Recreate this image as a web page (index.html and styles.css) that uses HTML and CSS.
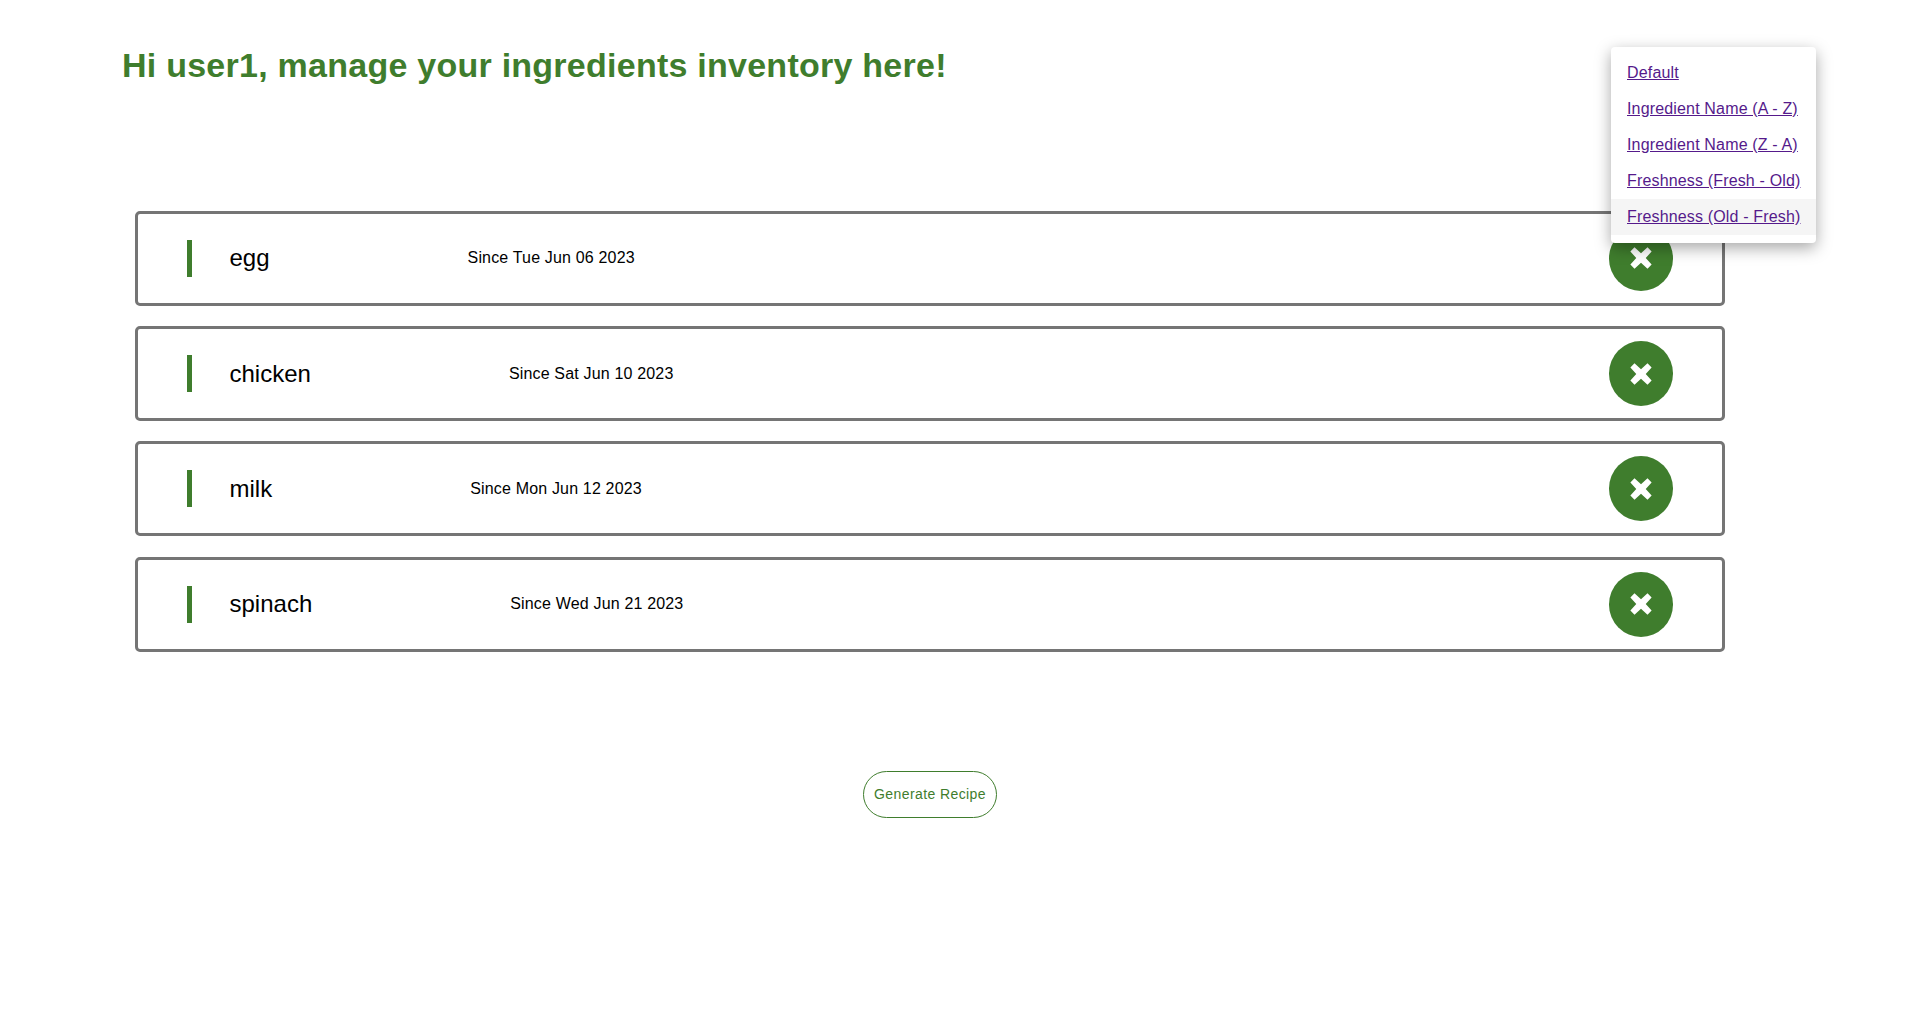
FILE: index.html
```html
<!DOCTYPE html>
<html lang="en">
<head>
<meta charset="utf-8">
<title>Ingredients inventory</title>
<link rel="stylesheet" href="styles.css">
</head>
<body>
<main class="page">
  <header class="top">
    <h1 class="title">Hi user1, manage your ingredients inventory here!</h1>
    <nav class="menu">
      <a href="#a" class="menu-link">Default</a>
      <a href="#b" class="menu-link">Ingredient Name (A - Z)</a>
      <a href="#c" class="menu-link">Ingredient Name (Z - A)</a>
      <a href="#d" class="menu-link">Freshness (Fresh - Old)</a>
      <a href="#e" class="menu-link hover">Freshness (Old - Fresh)</a>
    </nav>
  </header>
  <section class="list">
    <article class="card"><span class="bar"></span><span class="name">egg</span><span class="since">Since Tue Jun 06 2023</span><button class="del"><svg class="x" viewBox="0 0 22 22"><path d="M5.500 2 11 7 16.500 2 20 5.500 15 11 20 16.500 16.500 20 11 15 5.500 20 2 16.500 7 11 2 5.500Z"/></svg></button></article>
    <article class="card"><span class="bar"></span><span class="name">chicken</span><span class="since">Since Sat Jun 10 2023</span><button class="del"><svg class="x" viewBox="0 0 22 22"><path d="M5.500 2 11 7 16.500 2 20 5.500 15 11 20 16.500 16.500 20 11 15 5.500 20 2 16.500 7 11 2 5.500Z"/></svg></button></article>
    <article class="card"><span class="bar"></span><span class="name">milk</span><span class="since">Since Mon Jun 12 2023</span><button class="del"><svg class="x" viewBox="0 0 22 22"><path d="M5.500 2 11 7 16.500 2 20 5.500 15 11 20 16.500 16.500 20 11 15 5.500 20 2 16.500 7 11 2 5.500Z"/></svg></button></article>
    <article class="card"><span class="bar"></span><span class="name">spinach</span><span class="since">Since Wed Jun 21 2023</span><button class="del"><svg class="x" viewBox="0 0 22 22"><path d="M5.500 2 11 7 16.500 2 20 5.500 15 11 20 16.500 16.500 20 11 15 5.500 20 2 16.500 7 11 2 5.500Z"/></svg></button></article>
  </section>
  <div class="actions"><button class="generate">Generate Recipe</button></div>
</main>
</body>
</html>
```
FILE: styles.css
```css
* { box-sizing: border-box; }
html, body { margin: 0; background: #fff; }
body { font-family: "Liberation Sans", Arial, sans-serif; color: #000; }
.page { width: 1915px; height: 1015px; overflow: hidden; padding: 45px 0 0 122px; }
.top { position: relative; height: 165.700px; }
.title { margin: 0; font-size: 34px; line-height: 40px; font-weight: 700; color: #3f7d2d; letter-spacing: 0.25px; }
.menu { position: absolute; left: 1489px; top: 2px; width: 205px; height: 196px; padding: 8px 0; display: flex; flex-direction: column; background: #fff; border-radius: 4px; box-shadow: 0 5px 16px rgba(0,0,0,.35); z-index: 2; }
.menu-link { height: 36px; line-height: 36px; padding-left: 16px; font-size: 16px; letter-spacing: .16px; color: #551a8b; white-space: nowrap; }
.menu-link.hover { background: #f5f5f5; }
.list { display: flex; flex-direction: column; gap: 20.330px; margin-left: 13px; width: 1590px; }
.card { height: 95px; display: flex; align-items: center; border: 3px solid #757575; border-radius: 5px; padding-left: 49px; }
.bar { width: 5px; height: 37px; background: #3f7d2d; flex: none; }
.name { margin-left: 37.500px; font-size: 24px; }
.since { margin-left: 198px; font-size: 16px; letter-spacing: .17px; }
.del { margin-left: auto; margin-right: 49px; width: 64.500px; height: 65px; border: 0; padding: 0; border-radius: 50%; background: #3f7d2d; display: flex; align-items: center; justify-content: center; }
.x { width: 26px; height: 26px; fill: #fff; }
.actions { display: flex; justify-content: center; margin-left: 13px; width: 1590px; margin-top: 119.300px; }
.generate { width: 134px; height: 47px; background: #fff; border: 1px solid #3f7d2d; border-radius: 24px; color: #3f7d2d; font: 14px "Liberation Sans", Arial, sans-serif; letter-spacing: .4px; padding: 0; }
```
